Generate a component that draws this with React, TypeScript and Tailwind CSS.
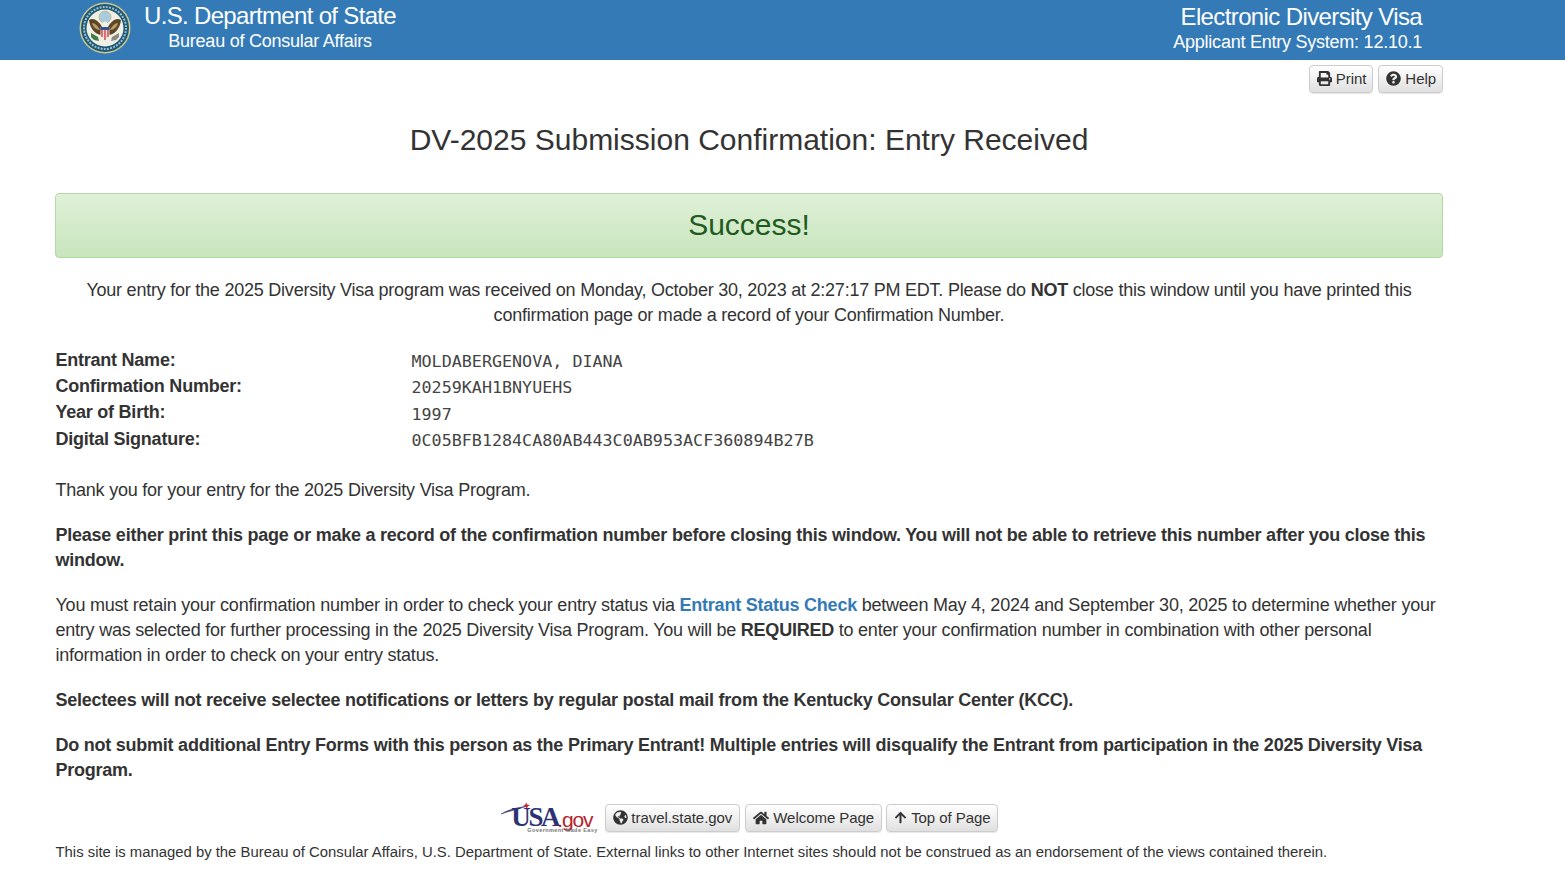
import React from "react";
import { FaPrint, FaQuestionCircle, FaGlobeAmericas, FaHome, FaArrowUp } from "react-icons/fa";

const btn = "inline-flex items-center h-[28px] pl-[7px] pr-[6px] pb-[1px] rounded-[4px] border border-[#ccc] bg-gradient-to-b from-white to-[#e0e0e0] text-[#333] text-[15px] tracking-[-0.05px] shadow-[0_1px_1px_rgba(0,0,0,0.1)] whitespace-nowrap";

function Seal() {
  return (
    <svg width="52" height="52" viewBox="0 0 52 52" className="shrink-0">
      <circle cx="26" cy="26" r="25.5" fill="#cfc88f" />
      <circle cx="26" cy="26" r="24" fill="#1d5a78" />
      <circle cx="26" cy="26" r="21" fill="none" stroke="#9fbccb" strokeWidth="2" strokeDasharray="2 1.2" />
      <circle cx="26" cy="26" r="18.5" fill="#f0efe6" />
      <circle cx="26" cy="15" r="6" fill="#a9cbe0" />
      <circle cx="26" cy="15" r="6" fill="none" stroke="#c7b46a" strokeWidth="0.8" />
      <path d="M10 18 C14 15 20 19 23 25 L23 33 C17 33 11 27 10 18Z" fill="#5e4526" />
      <path d="M42 18 C38 15 32 19 29 25 L29 33 C35 33 41 27 42 18Z" fill="#5e4526" />
      <path d="M13 21 C16 21 19 24 21 28 C17 28 14 25 13 21Z" fill="#b79c6c" />
      <path d="M39 21 C36 21 33 24 31 28 C35 28 38 25 39 21Z" fill="#b79c6c" />
      <circle cx="26" cy="22" r="2.4" fill="#f4f1e4" />
      <path d="M21.5 25 H30.5 V33 L26 38 L21.5 33Z" fill="#f4d9d7" />
      <path d="M23 28 V35 M26 28 V38 M29 28 V35" stroke="#c8474a" strokeWidth="1.4" />
      <path d="M21.5 25 H30.5 V28 H21.5Z" fill="#34558f" />
      <path d="M12 31 L19 35 L20 39 L15 38 L12 35Z" fill="#3f7d48" />
      <path d="M40 31 L33 35 L32 39 L37 38 L40 35Z" fill="#8b8b84" />
    </svg>
  );
}

function UsaGov() {
  return (
    <div className="relative w-[100px] h-[32px] shrink-0">
      <svg width="34" height="16" viewBox="0 0 34 16" className="absolute left-0 top-0">
        <path d="M1 12 C8 8 14 6 28 4 C18 7 10 9 1 12Z" fill="#3b3f7a" stroke="#3b3f7a" strokeWidth="0.5" />
        <path d="M26 0 L27 2.5 L30 3 L27.5 4.5 L27 7 L25.5 4.5 L23 4 L25.5 2.5Z" fill="#c4232f" />
      </svg>
      <span className="absolute left-[11px] top-[0px] text-[#2e3272] text-[27px] leading-[30px] font-bold font-['Liberation_Serif',serif] tracking-[-2.4px]">USA</span>
      <span className="absolute left-[57px] top-[3px] text-[#b5222c] text-[21px] leading-[30px] font-['Liberation_Sans',sans-serif] tracking-[-1.2px]">.gov</span>
      <span className="absolute left-[27px] top-[25px] text-[#777] text-[5.5px] leading-[6px] font-bold whitespace-nowrap tracking-[0.4px]">Government Made Easy</span>
    </div>
  );
}

function Row({ label, value }: { label: string; value: string }) {
  return (
    <div className="flex h-[26.3px] items-center">
      <div className="w-[356px] font-bold shrink-0 leading-[25px] tracking-[-0.24px]">{label}</div>
      <div className="font-['DejaVu_Sans_Mono','Liberation_Mono',monospace] text-[16.72px] tracking-normal text-[#444] leading-[25px] pt-[3px]">{value}</div>
    </div>
  );
}

export default function App() {
  return (
    <div className="min-h-[891px] bg-white text-[#333] text-[18px] leading-[25px] tracking-[-0.23px] font-['Liberation_Sans',Arial,sans-serif]">
      <header className="h-[60px] bg-[#337ab7] text-white flex justify-between">
        <div className="flex ml-[79px] pt-[2px]">
          <Seal />
          <div className="ml-[13px] w-[252px] text-center shrink-0 mt-[-2px]">
            <div className="text-[24px] leading-[31px] tracking-[-0.67px] whitespace-nowrap">U.S. Department of State</div>
            <div className="text-[18px] leading-[22px] tracking-[-0.25px] mt-[-1px] whitespace-nowrap">Bureau of Consular Affairs</div>
          </div>
        </div>
        <div className="mr-[143px] pt-[1px] text-right">
          <div className="text-[24px] leading-[31px] tracking-[-0.62px]">Electronic Diversity Visa</div>
          <div className="text-[18px] leading-[22px] tracking-[-0.24px] mt-[-1px]">Applicant Entry System: 12.10.1</div>
        </div>
      </header>

      <main className="ml-[55px] w-[1388px]">
        <div className="flex justify-end gap-[5px] pt-[5px]">
          <a className={btn}><FaPrint className="mr-[4px] text-[15px]" />Print</a>
          <a className={btn}><FaQuestionCircle className="mr-[4px] text-[15px]" />Help</a>
        </div>

        <h1 className="text-[30px] leading-[40px] text-center font-normal mt-[27px] tracking-normal">DV-2025 Submission Confirmation: Entry Received</h1>

        <div className="mt-[33px] h-[65px] pb-[2px] flex items-center justify-center rounded-[4px] border border-[#b2dba1] bg-gradient-to-b from-[#dff0d8] to-[#c8e5bc] text-[#1f5a20] text-[30px] tracking-normal">
          Success!
        </div>

        <p className="mt-[20px] text-center px-[20px]">
          Your entry for the 2025 Diversity Visa program was received on Monday, October 30, 2023 at 2:27:17 PM EDT. Please do <b>NOT</b> close this window until you have printed this confirmation page or made a record of your Confirmation Number.
        </p>

        <div className="mt-[19px] pl-[0.5px]">
          <Row label="Entrant Name:" value="MOLDABERGENOVA, DIANA" />
          <Row label="Confirmation Number:" value="20259KAH1BNYUEHS" />
          <Row label="Year of Birth:" value="1997" />
          <Row label="Digital Signature:" value="0C05BFB1284CA80AB443C0AB953ACF360894B27B" />
        </div>

        <div className="pl-[0.5px] mt-[26px] flex flex-col gap-[20px]">
          <p>Thank you for your entry for the 2025 Diversity Visa Program.</p>
          <p className="font-bold tracking-[-0.24px]">Please either print this page or make a record of the confirmation number before closing this window. You will not be able to retrieve this number after you close this window.</p>
          <p>You must retain your confirmation number in order to check your entry status via <a className="font-bold text-[#337ab7]">Entrant Status Check</a> between May 4, 2024 and September 30, 2025 to determine whether your entry was selected for further processing in the 2025 Diversity Visa Program. You will be <b>REQUIRED</b> to enter your confirmation number in combination with other personal information in order to check on your entry status.</p>
          <p className="font-bold tracking-[-0.24px]">Selectees will not receive selectee notifications or letters by regular postal mail from the Kentucky Consular Center (KCC).</p>
          <p className="font-bold tracking-[-0.24px]">Do not submit additional Entry Forms with this person as the Primary Entrant! Multiple entries will disqualify the Entrant from participation in the 2025 Diversity Visa Program.</p>
        </div>

        <div className="mt-[19px] flex justify-center items-center gap-[5px]">
          <UsaGov />
          <a className={btn}><FaGlobeAmericas className="mr-[3px] text-[15px]" />travel.state.gov<span className="w-px" /></a>
          <a className={btn}><FaHome className="mr-[4px] text-[16px]" />Welcome Page<span className="w-px" /></a>
          <a className={`${btn} -ml-px`}><FaArrowUp className="mr-[4px] text-[13px]" />Top of Page</a>
        </div>

        <p className="pl-[0.5px] mt-[8px] text-[14.87px] leading-[20px] tracking-normal">This site is managed by the Bureau of Consular Affairs, U.S. Department of State. External links to other Internet sites should not be construed as an endorsement of the views contained therein.</p>
      </main>
    </div>
  );
}
